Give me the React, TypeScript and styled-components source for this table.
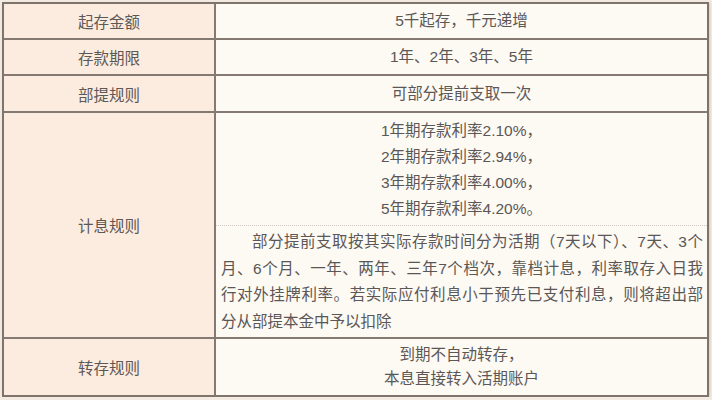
import * as React from "react"
import styled, { createGlobalStyle } from "styled-components"

const GlobalStyle = createGlobalStyle`
  html, body {
    margin: 0;
    padding: 0;
  }
  body {
    background: #f3ebe1;
    padding: 2px 0 0 2px;
    font-family: "Liberation Sans", "Noto Sans CJK SC", sans-serif;
    color: #5a5756;
  }
`

const Table = styled.div`
  width: 707px;
  box-sizing: border-box;
  border: 2px solid #7f746b;
  box-shadow: 1px 1px 2px rgba(120, 100, 80, 0.25);
`

const Row = styled.div<{ $h: number }>`
  display: grid;
  grid-template-columns: 212px 1fr;
  box-sizing: border-box;
  height: ${(p) => p.$h}px;
  & + & {
    border-top: 2px solid #857a71;
  }
`

const Label = styled.div`
  display: flex;
  align-items: center;
  justify-content: center;
  background: #fcecdf;
  border-right: 2px solid #857a71;
  font-size: 15.5px;
  color: #5c5855;
`

const Value = styled.div`
  display: flex;
  flex-direction: column;
  align-items: center;
  justify-content: center;
  background: #fdf9f3;
  font-size: 15.5px;
  line-height: 24px;
  text-align: center;
`

const SplitValue = styled.div`
  display: flex;
  flex-direction: column;
  background: #fdf9f3;
  font-size: 15.5px;
`

const RateBlock = styled.div`
  height: 113px;
  box-sizing: border-box;
  padding-top: 5px;
  line-height: 26px;
  text-align: center;
  border-bottom: 1px dotted #cfc7bf;
`

const Paragraph = styled.div`
  padding: 3px 4px 0 5px;
  line-height: 26.7px;
`

const Line = styled.div<{ $fill?: boolean; $indent?: boolean }>`
  white-space: nowrap;
  text-align: ${(p) => (p.$fill ? "justify" : "left")};
  text-align-last: ${(p) => (p.$fill ? "justify" : "left")};
  padding-left: ${(p) => (p.$indent ? "2em" : "0")};
`

const rates = [
  "1年期存款利率2.10%，",
  "2年期存款利率2.94%，",
  "3年期存款利率4.00%，",
  "5年期存款利率4.20%。",
]

export default function App() {
  return (
    <>
      <GlobalStyle />
      <Table>
        <Row $h={34}>
          <Label>起存金额</Label>
          <Value>5千起存，千元递增</Value>
        </Row>
        <Row $h={36}>
          <Label>存款期限</Label>
          <Value>1年、2年、3年、5年</Value>
        </Row>
        <Row $h={37}>
          <Label>部提规则</Label>
          <Value>可部分提前支取一次</Value>
        </Row>
        <Row $h={226}>
          <Label>计息规则</Label>
          <SplitValue>
            <RateBlock>
              {rates.map((r) => (
                <div key={r}>{r}</div>
              ))}
            </RateBlock>
            <Paragraph>
              <Line $fill $indent>
                部分提前支取按其实际存款时间分为活期（7天以下）、7天、3个
              </Line>
              <Line $fill>月、6个月、一年、两年、三年7个档次，靠档计息，利率取存入日我</Line>
              <Line $fill>行对外挂牌利率。若实际应付利息小于预先已支付利息，则将超出部</Line>
              <Line>分从部提本金中予以扣除</Line>
            </Paragraph>
          </SplitValue>
        </Row>
        <Row $h={58}>
          <Label>转存规则</Label>
          <Value>
            <div>到期不自动转存，</div>
            <div>本息直接转入活期账户</div>
          </Value>
        </Row>
      </Table>
    </>
  )
}
